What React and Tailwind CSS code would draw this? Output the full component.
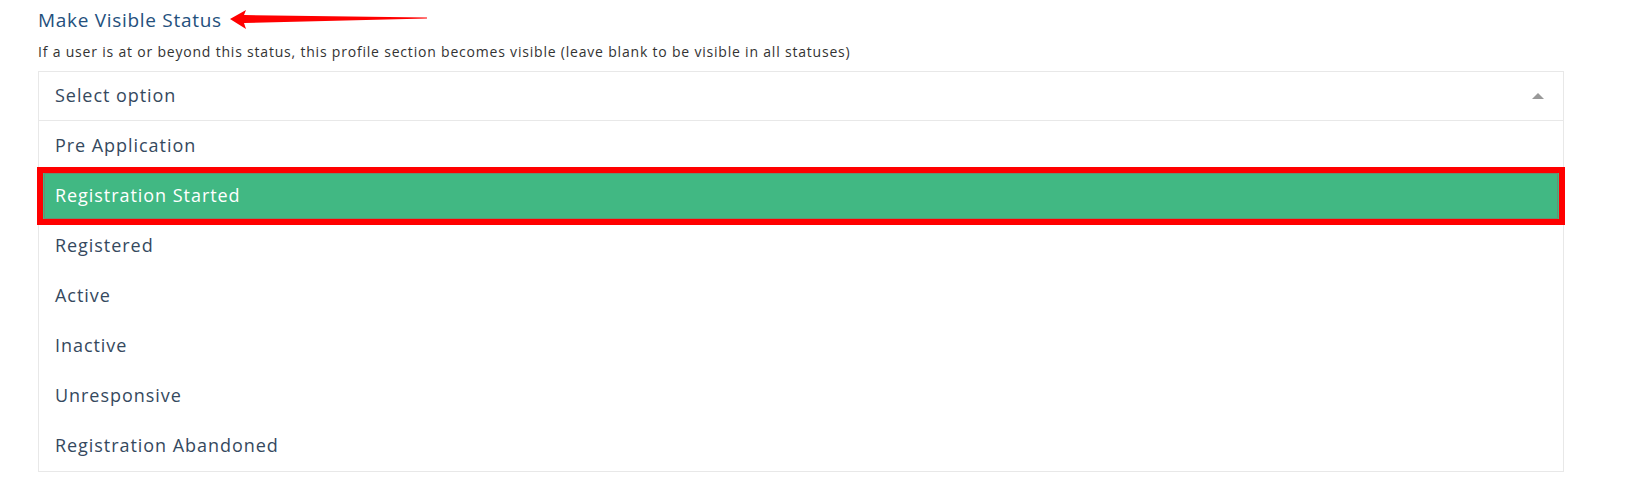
const options = [
  'Pre Application',
  'Registration Started',
  'Registered',
  'Active',
  'Inactive',
  'Unresponsive',
  'Registration Abandoned',
];

const Arrow = () => (
  <svg width="200" height="22" viewBox="0 0 200 22" className="ml-[8px] shrink-0">
    <polygon points="0,10 16,1 14,6 197,8.5 197,9.5 14,14 16,20" fill="#ff0000" />
  </svg>
);

export default function App() {
  const selected = 'Registration Started';
  return (
    <div className="min-h-[481px] bg-white pl-[38px] pr-[68px] pt-[7px] font-['Open_Sans',sans-serif]">
      <div className="flex items-center">
        <h2 className="text-[19px] leading-[26px] font-medium tracking-[0.7px] text-[#24507d]">Make Visible Status</h2>
        <Arrow />
      </div>
      <p className="mt-[9px] text-[14px] leading-[20px] tracking-[0.8px] text-[#333333]">
        If a user is at or beyond this status, this profile section becomes visible (leave blank to be visible in all statuses)
      </p>
      <div className="mt-[9px] border border-[#e8e8e8]">
        <div className="flex h-[49px] items-center justify-between border-b border-[#e8e8e8] pl-[16px] pr-[19px]">
          <span className="-mt-[1px] text-[18px] tracking-[0.95px] text-[#35495e]">Select option</span>
          <span className="h-0 w-0 border-x-[6px] border-b-[6px] border-x-transparent border-b-[#999999]" />
        </div>
        <ul>
          {options.map((o) =>
            o === selected ? (
              <li key={o} className="relative flex h-[50px] items-center bg-[#41b883] pb-[2px] pl-[16px] text-[18px] tracking-[0.95px] text-white">
                {o}
                <span className="pointer-events-none absolute -left-[2px] -right-[2px] -top-[4px] -bottom-[4px] border-[6px] border-[#ff0000]" />
                <span className="pointer-events-none absolute left-[5px] right-[5px] top-[2px] bottom-[2px] border border-[#6a8f73]" />
              </li>
            ) : (
              <li key={o} className="flex h-[50px] items-center pb-[2px] pl-[16px] text-[18px] tracking-[0.95px] text-[#35495e]">
                {o}
              </li>
            )
          )}
        </ul>
      </div>
    </div>
  );
}
